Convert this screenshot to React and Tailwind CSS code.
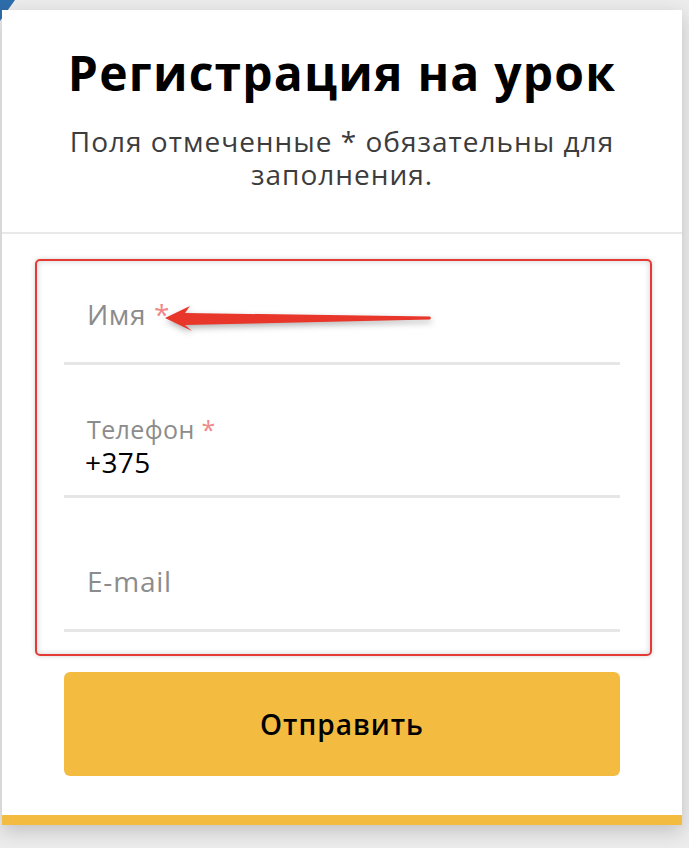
export default function App() {
  return (
    <div className="relative min-h-[848px] w-[689px] overflow-hidden bg-[#ececec] font-['Open_Sans',sans-serif]">
      <svg className="absolute left-0 top-0" width="16" height="22" viewBox="0 0 16 22">
        <polygon points="0,0 15,0 0,21" fill="#2e6dab" />
      </svg>
      <div className="relative ml-[2px] mt-[10px] w-[680px] bg-white shadow-[0_6px_18px_rgba(0,0,0,0.18)]">
        <div className="px-[20px] pt-[35px] pb-[41px] text-center">
          <h1 className="text-[48px] font-bold leading-[56px] tracking-[1.2px] text-black">Регистрация на урок</h1>
          <p className="mx-auto mt-[24px] w-[600px] text-[28px] leading-[33px] tracking-[1px] text-[#3c3c3c]">
            Поля отмеченные * обязательны для заполнения.
          </p>
        </div>
        <div className="h-[2px] bg-[#e9e9e9]" />
        <div className="px-[62px]">
          <div className="border-b-[3px] border-[#e6e6e6] pt-[62px] pb-[30px] pl-[23px]">
            <div className="text-[28px] leading-[36px] tracking-[0.6px] text-[#8c8c8c]">
              Имя <span className="text-[#ef8a8a]">*</span>
            </div>
          </div>
          <div className="border-b-[3px] border-[#e6e6e6] pt-[50px] pb-[16px] pl-[23px]">
            <div className="text-[25px] leading-[28px] tracking-[0.4px] text-[#8c8c8c]">
              Телефон <span className="text-[#ef8a8a]">*</span>
            </div>
            <div className="-ml-[2px] mt-[2px] text-[28px] leading-[34px] tracking-[0.4px] text-black">+375</div>
          </div>
          <div className="border-b-[3px] border-[#e6e6e6] pt-[65px] pb-[30px] pl-[23px]">
            <div className="text-[28px] leading-[36px] tracking-[0.8px] text-[#8c8c8c]">E-mail</div>
          </div>
          <button className="mt-[40px] flex h-[104px] w-full items-center justify-center rounded-[6px] bg-[#f3bc41] text-[28px] font-semibold tracking-[1px] text-black">
            Отправить
          </button>
        </div>
        <div className="mt-[39px] h-[10px] bg-[#f3bc41]" />
      </div>
      <div className="pointer-events-none absolute left-[35px] top-[259px] h-[397px] w-[617px] rounded-[5px] border-2 border-[#e53935] shadow-[inset_0_0_6px_rgba(0,0,0,0.18),0_0_5px_rgba(0,0,0,0.18)]" />
      <svg className="pointer-events-none absolute left-0 top-0 drop-shadow-[1px_3px_3px_rgba(0,0,0,0.3)]" width="689" height="848" viewBox="0 0 689 848">
        <polygon points="165,318 190,306 185,313 430,316.5 431,318 430,319.5 185,325 192,331" fill="#e8362a" />
      </svg>
    </div>
  );
}
